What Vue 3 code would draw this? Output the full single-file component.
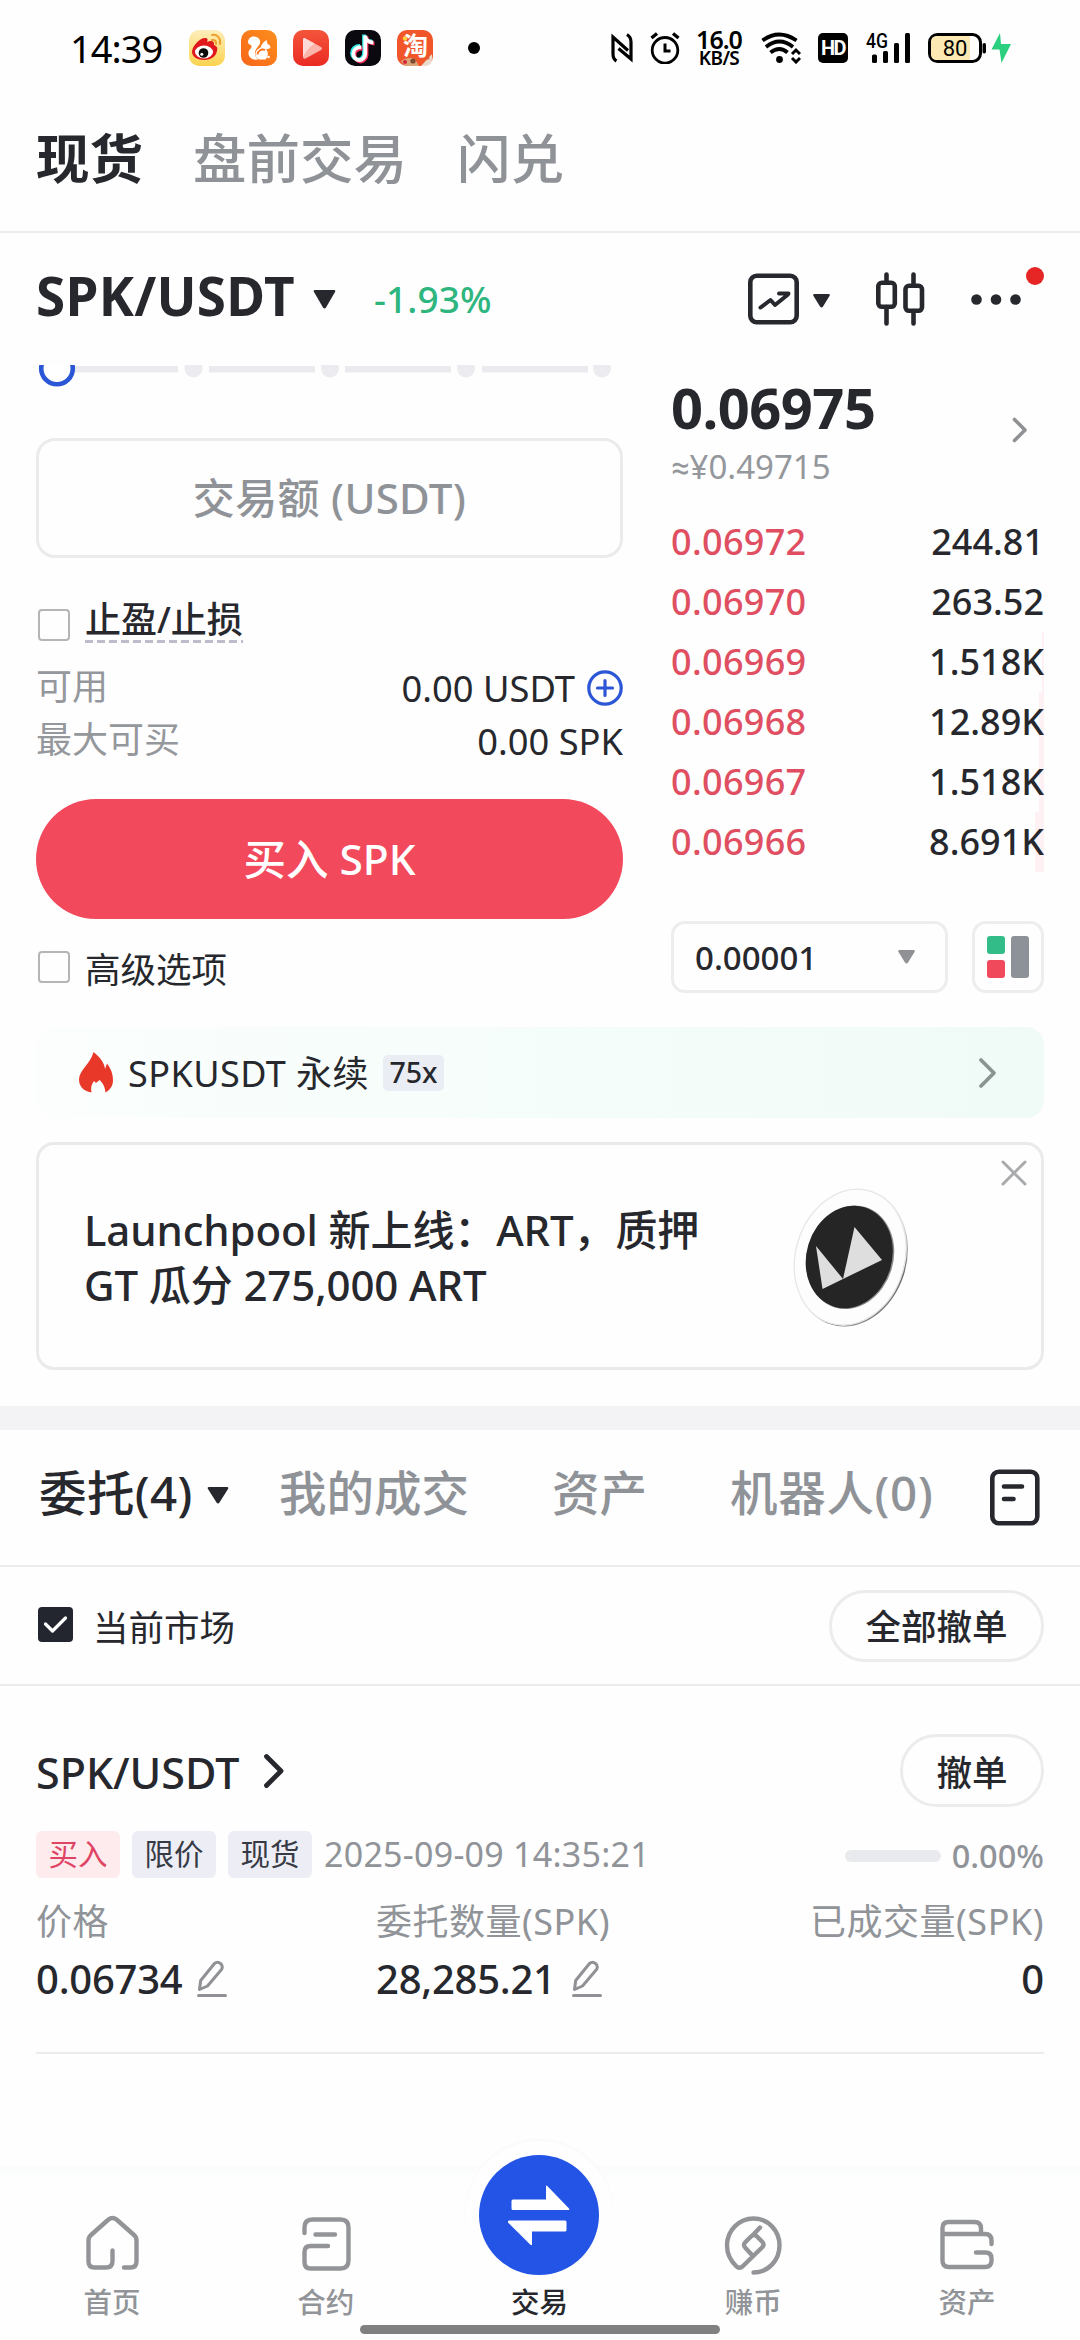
<script setup>
const topTabs = ['现货', '盘前交易', '闪兑']

const asks = [
  { price: '0.06972', amount: '244.81', depth: 0 },
  { price: '0.06970', amount: '263.52', depth: 0 },
  { price: '0.06969', amount: '1.518K', depth: 2 },
  { price: '0.06968', amount: '12.89K', depth: 5 },
  { price: '0.06967', amount: '1.518K', depth: 5 },
  { price: '0.06966', amount: '8.691K', depth: 9 },
]

const sliderStops = [157.5, 294, 430, 566]
const sliderBars = [[38, 104], [173, 106], [309, 106], [446, 106]]
</script>

<template>
  <div class="screen">
    <header class="status">
      <span class="clock">14:39</span>
      <div class="apps">
        <svg width="36" height="36" viewBox="0 0 36 36">
          <defs>
            <linearGradient id="wb" x1="0" y1="0" x2="0" y2="1"><stop offset="0" stop-color="#fdeebb" /><stop offset="1" stop-color="#fcd34f" /></linearGradient>
          </defs>
          <rect width="36" height="36" rx="10" fill="url(#wb)" />
          <path d="M3 22c0-6 8-14 13-14 3 0 3 2 2 4 4-2 8-1 7 3 3 1 4 3 3 6-1 6-7 9-13 9S3 27 3 22z" fill="#e0171c" />
          <ellipse cx="15" cy="22" rx="9" ry="6.500" fill="#fff" />
          <circle cx="14.500" cy="23" r="4.800" fill="#0b0b0b" />
          <circle cx="12.800" cy="24.300" r="1.500" fill="#fff" />
          <path d="M23 5c5-1 9 3 8 9M23 10c3-.5 4.500 1 4 4" fill="none" stroke="#f0a02c" stroke-width="2" stroke-linecap="round" />
        </svg>
        <svg width="36" height="36" viewBox="0 0 36 36">
          <defs>
            <linearGradient id="uc" x1="1" y1="0" x2="0" y2="1"><stop offset="0" stop-color="#fb8f1c" /><stop offset="1" stop-color="#f9661a" /></linearGradient>
          </defs>
          <rect width="36" height="36" rx="10" fill="url(#uc)" />
          <path d="M12.500 6.500c5.500 0 8 4 6 8-2.500 3.500-5 5.500-4.500 9.500.3 2.500 1.500 4.500 3 5.500-6 1-10-2.500-9.500-7 .5-3.500 3.500-4 3-6.500-.5-2-3.500-1-3.500-4 0-3 2.500-5.500 5.500-5.500z" fill="#fff" />
          <path d="M25.500 10l1 4c2.500 1 3 2.500 3 4-2 1-3 1-4.500 1 2.500 3 2.500 7.500-.5 10.500H19c-4-.5-5.500-4.500-4-8 1.500-2.500 3-3 4.500-4 1-3.500 3-5.500 6-7.500z" fill="#fff" />
          <path d="M16.500 24.500c.5-4 4-6 7.500-4.500" fill="none" stroke="#f9721a" stroke-width="1.800" />
          <circle cx="27.500" cy="27" r="1.300" fill="#fff" />
        </svg>
        <svg width="36" height="36" viewBox="0 0 36 36">
          <defs>
            <linearGradient id="pl" x1="0" y1="0" x2="0" y2="1"><stop offset="0" stop-color="#f4553b" /><stop offset="1" stop-color="#ea2a22" /></linearGradient>
          </defs>
          <rect width="36" height="36" rx="10" fill="url(#pl)" />
          <path d="M10 10q0-3 2.500-1.500l15.500 8.500q2 1.500 0 3l-15.500 8.500q-2.500 1-2.500-1.500z" fill="#fbb5ab" />
          <path d="M10 27V10q0-3 2.500-1.500l9 5q-8 6-11.500 13.500z" fill="#fddad5" />
        </svg>
        <svg width="36" height="36" viewBox="0 0 36 36">
          <rect width="36" height="36" rx="10" fill="#0a0910" />
          <g fill="none" stroke-width="3.800">
            <path d="M15 16c-5 0-8 3-8 7s3 6.500 6 6.500 6-2.500 6-6.500V4.500c0 4 3 7 8 7" stroke="#2fe8e6" />
            <path d="M17.500 18.500c-5 0-8 3-8 6.500s3 6.500 6 6.500 6-3 6-6.500V6.500c0 4 3 7 8 7" stroke="#f4335c" />
            <path d="M16.300 17.200c-5 0-8 3-8 6.500s3 6.500 6 6.500 6-3 6-6.500V5.500c0 4 3 7 8 7" stroke="#fff" />
          </g>
        </svg>
        <svg class="open" width="36" height="36" viewBox="0 0 36 36">
          <rect width="36" height="36" rx="10" fill="#f1562b" />
          <path d="M4 31q7-5 14-2l4 7H10q-4-1-6-5z" fill="#dba477" />
          <path d="M24 36l11-12v4q0 7-6 8z" fill="#e9dccd" />
          <circle cx="8" cy="32" r="2" fill="#d4233a" />
          <circle cx="16" cy="31" r="2.600" fill="#7c4a31" />
          <circle cx="31" cy="28" r="1.500" fill="#e35a3a" />
          <text x="18.500" y="25" text-anchor="middle" class="tao">淘</text>
          <circle cx="8" cy="8.500" r="2.200" fill="#ffd23c" />
        </svg>
      </div>
      <i class="more-dot"></i>
      <div class="signals">
        <svg class="nfc" width="22" height="30" viewBox="0 0 22 30" fill="none" stroke="#000" stroke-width="3.200">
          <path d="M5.500 28Q2 26 2 21V4l15 13.500" />
          <path d="M16 1.500Q20 4 20 9v17L7.500 15.500" />
        </svg>
        <svg class="alarm" width="30" height="32" viewBox="0 0 30 32" fill="none" stroke="#000" stroke-width="2.800">
          <circle cx="15" cy="18.300" r="12.800" />
          <path d="M15 11.500V19h5.500" stroke-width="3" />
          <path d="M1.500 6L7 1.500M23 1.500L28.500 6" stroke-width="3.400" />
        </svg>
        <div class="rate"><b>16.0</b><span>KB/S</span></div>
        <svg class="wifi" width="40" height="32" viewBox="0 0 40 32" fill="none" stroke="#000" stroke-width="3.800">
          <path d="M1.500 8.500Q18 -3.500 35.500 8.500" />
          <path d="M5 15Q18.500 4 32 15" />
          <path d="M9.500 20.500Q18.500 13.500 26.500 20.500" />
          <circle cx="18.500" cy="27.500" r="3.400" fill="#000" stroke="none" />
          <path d="M31 22l4-4 4 4M31 26l4 4 4-4" stroke-width="3" />
        </svg>
        <span class="hd">HD</span>
        <svg class="cell open" width="44" height="32" viewBox="0 0 44 32">
          <text x="0" y="16" class="net" textLength="22" lengthAdjust="spacingAndGlyphs">4G</text>
          <g fill="#000">
            <rect x="6" y="22.500" width="5" height="8.500" rx="1.500" />
            <rect x="17" y="19" width="5" height="12" rx="1.500" />
            <rect x="28" y="11" width="5" height="20" rx="1.500" />
            <rect x="39" y="1" width="5" height="30" rx="1.500" />
          </g>
        </svg>
        <svg class="battery" width="86" height="32" viewBox="0 0 86 32">
          <rect x="1.500" y="2.500" width="51" height="27" rx="8" fill="#fff" stroke="#000" stroke-width="3" />
          <path d="M9 4h33v24H9q-6 0-6-6V10q0-6 6-6z" fill="#fce8b2" />
          <rect x="54.500" y="11" width="3.500" height="10.500" rx="1.700" fill="#000" />
          <text x="27" y="23.500" text-anchor="middle" class="pct">80</text>
          <path d="M72 1L63.500 17.500h8L73.500 31 83 12h-10z" fill="#2bd07f" />
        </svg>
      </div>
    </header>

    <nav class="top-tabs">
      <span v-for="(t, i) in topTabs" :key="t" :class="{ active: i === 0 }">{{ t }}</span>
    </nav>

    <section class="pair-bar">
      <h1>SPK/USDT</h1>
      <svg class="pair-tri" width="23" height="19" viewBox="0 0 23 19"><path d="M2 0h19q2 0 1 2L13 17.500q-1.500 2-3 0L1 2Q0 0 2 0z" fill="#26282d" /></svg>
      <span class="change">-1.93%</span>
      <div class="tools">
        <svg width="51" height="52" viewBox="0 0 51 52" fill="none" stroke="#26282d" stroke-width="4.600" stroke-linecap="round" stroke-linejoin="round">
          <rect x="2.300" y="2.800" width="46.400" height="46.400" rx="6.500" />
          <path d="M12.500 34.500L22.500 27l4.500 5L40 21.500M31 20.500h9.500" stroke-width="4" />
        </svg>
        <svg class="tool-tri" width="17" height="14" viewBox="0 0 17 14"><path d="M1.500 0h14q2 0 1 2L10 12.500q-1.500 2-3 0L.5 2Q-.5 0 1.500 0z" fill="#26282d" /></svg>
        <svg class="candles" width="49" height="54" viewBox="0 0 49 54" fill="none" stroke="#26282d" stroke-width="4.600" stroke-linecap="round">
          <rect x="2.300" y="10.800" width="16.500" height="24" rx="3.500" />
          <rect x="29.500" y="13.800" width="16.500" height="25" rx="3.500" />
          <path d="M10.500 2.500v8M10.500 35v16.500M37.500 2.500v11M37.500 39v12.500" />
        </svg>
        <div class="more">
          <svg width="50" height="11" viewBox="0 0 50 11" fill="#26282d"><circle cx="5.500" cy="5.500" r="5.300" /><circle cx="25" cy="5.500" r="5.300" /><circle cx="44.500" cy="5.500" r="5.300" /></svg>
          <i class="badge"></i>
        </div>
      </div>
    </section>

    <section class="trade">
      <div class="form">
        <svg class="slider" width="587" height="22" viewBox="0 0 587 22">
          <rect v-for="b in sliderBars" :key="b[0]" :x="b[0]" y="1" :width="b[1]" height="6.500" fill="#ebebef" />
          <circle v-for="s in sliderStops" :key="s" :cx="s" cy="3.500" r="9" fill="#ebebf0" />
          <circle cx="21" cy="3.500" r="15.800" fill="#fff" stroke="#2b56d6" stroke-width="4.600" />
        </svg>
        <div class="input">交易额 (USDT)</div>
        <div class="check-row tp">
          <i class="box"></i><span class="dashed">止盈/止损</span>
        </div>
        <div class="kv kv-a">
          <span>可用</span>
          <b>0.00 USDT
            <svg width="36" height="36" viewBox="0 0 36 36" fill="none" stroke="#2b56d6" stroke-width="3.200" stroke-linecap="round"><circle cx="18" cy="18" r="16.200" /><path d="M10.500 18h15M18 10.500v15" /></svg>
          </b>
        </div>
        <div class="kv"><span>最大可买</span><b>0.00 SPK</b></div>
        <button class="buy">买入 SPK</button>
        <div class="check-row adv"><i class="box"></i><span>高级选项</span></div>
      </div>

      <div class="book">
        <div class="last">
          <div>
            <div class="last-price">0.06975</div>
            <div class="fiat"><span class="approx">≈</span>¥0.49715</div>
          </div>
          <svg width="16" height="26" viewBox="0 0 16 26" fill="none" stroke="#8f9195" stroke-width="3.600" stroke-linecap="round" stroke-linejoin="round"><path d="M2.500 2.500L13 13 2.500 23.500" /></svg>
        </div>
        <div class="asks">
          <div v-for="a in asks" :key="a.price" class="ask">
            <i class="depth" :style="{ width: a.depth + 'px' }"></i>
            <span class="ask-price">{{ a.price }}</span>
            <span class="ask-amount">{{ a.amount }}</span>
          </div>
        </div>
        <div class="book-tools">
          <div class="step">
            <span>0.00001</span>
            <svg width="17" height="14" viewBox="0 0 17 14"><path d="M1.500 0h14q2 0 1 2L10 12.500q-1.500 2-3 0L.5 2Q-.5 0 1.500 0z" fill="#8f9195" /></svg>
          </div>
          <div class="layout">
            <svg width="42" height="42" viewBox="0 0 42 42"><rect width="18" height="18" rx="3" fill="#32bd88" /><rect y="24" width="18" height="18" rx="3" fill="#f1495c" /><rect x="24" width="18" height="42" rx="3" fill="#8d9299" /></svg>
          </div>
        </div>
      </div>
    </section>

    <section class="perp">
      <svg class="flame" width="34" height="41" viewBox="0 0 34 41"><path d="M14.500 0C21 5 25.500 11 26 17l2-5.500c4 5 6 11 6 16.500 0 6-3 10-7.500 12.500-.5-5-2-9-6-12.500l-3.500 3-2-2c-2.500 3-3.500 7-2.500 11.500C4 39 0 34 0 27.500 0 18 11.500 12 14.500 0z" fill="#e8382a" /></svg>
      <span class="perp-name">SPKUSDT 永续</span>
      <span class="lev">75x</span>
      <svg class="perp-go" width="19" height="32" viewBox="0 0 19 32" fill="none" stroke="#8a9491" stroke-width="3.800" stroke-linecap="round" stroke-linejoin="round"><path d="M3 3l13 13L3 29" /></svg>
    </section>

    <section class="promo">
      <p>Launchpool 新上线：ART，质押<br />GT 瓜分 275,000 ART</p>
      <svg class="coin" width="120" height="142" viewBox="0 0 120 142">
        <defs>
          <linearGradient id="rim" x1="0" y1="0" x2="1" y2="1"><stop offset="0" stop-color="#ededed" /><stop offset=".5" stop-color="#d8d8d8" /><stop offset=".75" stop-color="#6c6c6c" /><stop offset="1" stop-color="#9a9a9a" /></linearGradient>
        </defs>
        <g transform="rotate(17 60 71)">
          <ellipse cx="60.500" cy="71" rx="55" ry="69.500" fill="url(#rim)" />
          <ellipse cx="59" cy="70.500" rx="54.500" ry="69" fill="#fdfdfd" stroke="#e6e6e6" stroke-width="1.300" />
          <ellipse cx="59" cy="70.500" rx="43.200" ry="52.500" fill="#8b8b8b" />
          <ellipse cx="58" cy="70.500" rx="42.700" ry="52" fill="#252525" />
        </g>
        <path d="M63.500 40L52 92 91 73z" fill="#dedede" />
        <path d="M25 59L52 92 31.500 102z" fill="#dedede" />
      </svg>
      <svg class="close" width="28" height="28" viewBox="0 0 28 28" fill="none" stroke="#a8aaac" stroke-width="3" stroke-linecap="round"><path d="M3 3l22 22M25 3L3 25" /></svg>
    </section>

    <div class="band"></div>

    <nav class="order-tabs">
      <span class="active t1">委托(4)</span>
      <svg class="t-tri" width="22" height="17" viewBox="0 0 22 17"><path d="M2 0h18q2 0 1 2l-8.500 13.500q-1.500 2-3 0L1 2Q0 0 2 0z" fill="#26282d" /></svg>
      <span class="t2">我的成交</span>
      <span class="t3">资产</span>
      <span class="t4">机器人(0)</span>
      <svg class="history" width="50" height="57" viewBox="0 0 50 57" fill="none" stroke="#26282d" stroke-width="4.600" stroke-linecap="round"><rect x="2.300" y="2.800" width="45" height="51.500" rx="6.500" /><path d="M14 17.500h18M14 30h9.500" /></svg>
    </nav>

    <div class="filter">
      <svg width="35" height="35" viewBox="0 0 35 35"><rect width="35" height="35" rx="4" fill="#23262f" /><path d="M7.500 17l7 7L27.500 11" fill="none" stroke="#fff" stroke-width="3.200" stroke-linecap="round" stroke-linejoin="round" /></svg>
      <span>当前市场</span>
      <button class="pill all">全部撤单</button>
    </div>

    <article class="order">
      <div class="order-head">
        <h2>SPK/USDT</h2>
        <svg width="22" height="36" viewBox="0 0 22 36" fill="none" stroke="#26282d" stroke-width="4.800" stroke-linecap="round" stroke-linejoin="round"><path d="M3.500 3.500L18 18 3.500 32.500" /></svg>
        <button class="pill one">撤单</button>
      </div>
      <div class="meta">
        <span class="tag red">买入</span><span class="tag">限价</span><span class="tag">现货</span>
        <time>2025-09-09 14:35:21</time>
        <i class="progress"></i>
        <span class="fill">0.00%</span>
      </div>
      <div class="cols labels"><span>价格</span><span>委托数量(SPK)</span><span>已成交量(SPK)</span></div>
      <div class="cols values">
        <span>0.06734
          <svg width="30" height="38" viewBox="0 0 30 38" fill="none" stroke="#8f9195" stroke-width="3" stroke-linecap="round" stroke-linejoin="round"><path d="M2.500 29.500l1.200-9L17.500 3.500q3-2.500 6 0 3 2.500 1 6L10.500 26z" /><path d="M1.500 35.500h27" /></svg>
        </span>
        <span>28,285.21
          <svg class="pen2" width="30" height="38" viewBox="0 0 30 38" fill="none" stroke="#8f9195" stroke-width="3" stroke-linecap="round" stroke-linejoin="round"><path d="M2.500 29.500l1.200-9L17.500 3.500q3-2.500 6 0 3 2.500 1 6L10.500 26z" /><path d="M1.500 35.500h27" /></svg>
        </span>
        <span>0</span>
      </div>
    </article>

    <nav class="bottom">
      <a>
        <svg width="60" height="60" viewBox="0 0 60 60" fill="none" stroke="#929497" stroke-width="4.400" stroke-linecap="round" stroke-linejoin="round"><path d="M30.500 36.500V47q0 6.500-6.500 6.500H12.500q-6 0-6-6V26.500q0-3.500 2.500-5.500L26.500 5.500q4-3 8 0L52 21q2.500 2 2.500 5.500v21q0 6-6 6H42" /></svg>
        <span>首页</span>
      </a>
      <a>
        <svg width="60" height="60" viewBox="0 0 60 60" fill="none" stroke="#929497" stroke-width="4.400" stroke-linecap="round" stroke-linejoin="round"><path d="M8.500 19v-5.500q0-8 8-8h28q8 0 8 8v33q0 8-8 8h-30q-6 0-6-6.500V38q0-6 6-6H32M19.500 20.500H39" /></svg>
        <span>合约</span>
      </a>
      <a class="current">
        <i class="trade-btn">
          <svg width="62" height="60" viewBox="0 0 62 60" fill="#fff"><path d="M5 14.500h33V1.500q0-1.500 1.300-.5L61 23.500q1 1.500-1 1.500H5q-1.500 0-1.500-1.500V16q0-1.500 1.500-1.500z" /><path d="M57 46.500H24V59.500q0 1.500-1.300.5L0 37.500Q-.5 35.500 1.500 35.500H57q1.500 0 1.500 1.500v8q0 1.500-1.500 1.500z" /></svg>
        </i>
        <span>交易</span>
      </a>
      <a>
        <svg class="open" width="60" height="60" viewBox="0 0 60 60" fill="none" stroke="#929497" stroke-width="4.400" stroke-linecap="round" stroke-linejoin="round"><path d="M30.500 58.500C45 58.500 56.500 46.500 56.500 31.500S45 4.500 30.500 4.500 4 16.500 4 31.500c0 8 3.500 15 9 20.500q3.500 3.500 7 0L39 33.500q3-3 0-6l-5-5q-3-3-6 0l-5.500 5.500q-3 3 0 6l6.500 7M30.500 20.500l6.500-7" /></svg>
        <span>赚币</span>
      </a>
      <a>
        <svg width="60" height="60" viewBox="0 0 60 60" fill="none" stroke="#929497" stroke-width="4.400" stroke-linecap="round" stroke-linejoin="round"><path d="M5.500 20V14q0-6 6-6h26q6.500 0 6.500 6.500V20M5.500 20H48q6.500 0 6.500 6.500V30M5.500 20v26.500q0 6.500 6.500 6.500h36q6.500 0 6.500-6.500V44.500q0-6-6-6H39" /></svg>
        <span>资产</span>
      </a>
      <i class="home-bar"></i>
    </nav>
  </div>
</template>

<style>
body {
  margin: 0;
  background: #fefefe;
}
</style>

<style scoped>
* {
  box-sizing: border-box;
}
.screen {
  width: 1080px;
  height: 2340px;
  overflow: hidden;
  display: flex;
  flex-direction: column;
  background: #fefefe;
  color: #26282d;
  font-family: 'Noto Sans', 'Noto Sans CJK SC', sans-serif;
  white-space: nowrap;
}
.screen > * {
  flex: none;
}
svg {
  display: block;
  flex: none;
}
.open {
  overflow: visible;
}
i {
  display: block;
  flex: none;
}
button {
  font-family: inherit;
  padding: 0;
  margin: 0;
  color: inherit;
}
h1,
h2,
p {
  margin: 0;
}

/* status bar */
.status {
  height: 96px;
  display: flex;
  align-items: center;
  padding-left: 70px;
  color: #000;
}
.clock {
  width: 119px;
  font-size: 38px;
  line-height: 40px;
  letter-spacing: -1px;
}
.apps {
  display: flex;
  gap: 16px;
}
.tao {
  font: 700 25px 'Noto Sans CJK SC', sans-serif;
  fill: #fff;
}
.more-dot {
  width: 12px;
  height: 12px;
  border-radius: 50%;
  background: #000;
  margin-left: 35px;
}
.signals {
  display: flex;
  align-items: center;
  margin-left: 131px;
}
.alarm {
  margin-left: 17px;
}
.rate {
  width: 48px;
  margin-left: 15px;
  display: flex;
  flex-direction: column;
  align-items: center;
  text-align: center;
}
.rate b {
  font: 600 25px/20px 'Noto Sans', sans-serif;
  letter-spacing: -1px;
}
.rate span {
  font: 600 19px/18px 'Noto Sans', sans-serif;
  letter-spacing: -0.6px;
}
.wifi {
  margin-left: 18px;
}
.hd {
  width: 30px;
  height: 30px;
  margin-left: 17px;
  border-radius: 5px;
  background: #000;
  color: #fff;
  font: 700 20px/30px 'Roboto', sans-serif;
  letter-spacing: -1.5px;
  text-align: center;
}
.cell {
  margin-left: 18px;
}
.net {
  font: 500 21px 'Roboto', sans-serif;
}
.battery {
  margin-left: 18px;
}
.pct {
  font: 400 22px 'Roboto', sans-serif;
}

/* top tabs */
.top-tabs {
  height: 137px;
  padding: 0 36px 10px;
  display: flex;
  align-items: center;
  gap: 50px;
  border-bottom: 2px solid #ececed;
  font-size: 53.5px;
  line-height: 70px;
  font-weight: 500;
  color: #8f9398;
}
.top-tabs .active {
  font-weight: 700;
  color: #26282d;
}

/* pair bar */
.pair-bar {
  height: 132px;
  padding: 0 36px;
  display: flex;
  align-items: center;
}
h1 {
  font-size: 53px;
  line-height: 64px;
  font-weight: 700;
  width: 261px;
  margin-top: -6px;
  letter-spacing: 0.3px;
}
.pair-tri {
  margin-left: 16px;
}
.change {
  margin-left: 38px;
  font-size: 37px;
  line-height: 44px;
  font-weight: 500;
  letter-spacing: 0.1px;
  color: #2fb67f;
}
.tools {
  margin-left: auto;
  display: flex;
  align-items: center;
}
.tool-tri {
  margin: 3px 46px 0 14px;
}
.more {
  position: relative;
  margin-left: 46px;
  padding-right: 23px;
}
.badge {
  position: absolute;
  right: 0;
  top: -27px;
  width: 18px;
  height: 18px;
  border-radius: 50%;
  background: #e62525;
}

/* trade area */
.trade {
  height: 662px;
  padding: 0 36px;
  display: flex;
  justify-content: space-between;
}
.form {
  width: 587px;
}
.input {
  height: 120px;
  margin-top: 51px;
  border: 3px solid #ebebec;
  border-radius: 19px;
  text-align: center;
  font-size: 42px;
  line-height: 114px;
  font-weight: 500;
  letter-spacing: 0.3px;
  color: #8f9398;
}
.check-row {
  display: flex;
  align-items: center;
  font-size: 35.5px;
}
.box {
  width: 32px;
  height: 32px;
  margin: 0 15px 0 2px;
  border: 2.5px solid #b4b5b7;
  border-radius: 4px;
}
.tp {
  height: 43px;
  margin-top: 42px;
  font-weight: 500;
  font-size: 36px;
}
.tp .box {
  margin-top: 7px;
}
.dashed {
  height: 43px;
  line-height: 40px;
  background: repeating-linear-gradient(90deg, #bcbccb 0 8px, transparent 8px 12px) left bottom / 100% 3px no-repeat;
}
.kv {
  height: 52px;
  display: flex;
  justify-content: space-between;
  align-items: center;
  font-size: 36.3px;
  line-height: 52px;
}
.kv-a {
  height: 54px;
  margin-top: 18px;
}
.kv span {
  color: #94979b;
  font-size: 36px;
  margin-top: -2px;
}
.kv b {
  font-weight: 400;
  display: flex;
  align-items: center;
  gap: 12px;
}
.buy {
  display: block;
  width: 587px;
  height: 120px;
  margin-top: 32px;
  border: 0;
  border-radius: 60px;
  background: #f2495c;
  color: #fff;
  font-size: 42.5px;
  line-height: 120px;
  font-weight: 500;
}
.adv {
  height: 52px;
  margin-top: 23px;
}
.adv .box {
  margin-top: -2px;
}
.adv span {
  margin-top: -2px;
}
.book {
  width: 373px;
}
.last {
  margin-top: 7px;
  display: flex;
  justify-content: space-between;
  align-items: center;
  padding-right: 16px;
}
.last svg {
  margin-top: -3px;
}
.last-price {
  font-size: 56px;
  line-height: 70px;
  font-weight: 700;
  letter-spacing: -0.5px;
}
.fiat {
  margin-top: 3px;
  font-size: 33px;
  line-height: 44px;
  color: #94979b;
}
.approx {
  font-family: 'Roboto', sans-serif;
}
.asks {
  margin-top: 22px;
}
.ask {
  position: relative;
  height: 60px;
  display: flex;
  justify-content: space-between;
  font-size: 36px;
  line-height: 60px;
  font-weight: 500;
}
.ask span {
  position: relative;
}
.depth {
  position: absolute;
  right: 0;
  top: 0;
  height: 60px;
  background: #fef1f3;
}
.ask-price {
  color: #df4f61;
  letter-spacing: 0.3px;
}
.book-tools {
  margin-top: 49px;
  display: flex;
  justify-content: space-between;
}
.step,
.layout {
  height: 72px;
  border: 3px solid #ecedee;
  border-radius: 14px;
  display: flex;
  align-items: center;
}
.step {
  width: 277px;
  padding: 0 30px 0 21px;
  justify-content: space-between;
  font-size: 33px;
  font-weight: 500;
}
.layout {
  width: 72px;
  justify-content: center;
}

/* perpetual strip */
.perp {
  height: 91px;
  margin: 0 36px;
  padding: 0 47px 0 43px;
  border-radius: 18px;
  background: linear-gradient(90deg, #fbfefd, #f5fdfa 50%, #f0faf6);
  display: flex;
  align-items: center;
}
.perp-name {
  margin-left: 15px;
  margin-top: -2px;
  font-size: 36px;
  letter-spacing: 0.45px;
}
.lev {
  margin-left: 14px;
  width: 61px;
  height: 36px;
  border-radius: 5px;
  background: #ebedf5;
  text-align: center;
  font-size: 28.5px;
  line-height: 35px;
  font-weight: 500;
}
.perp-go {
  margin-left: auto;
}

/* promo card */
.promo {
  position: relative;
  height: 228px;
  margin: 24px 36px 0;
  padding-left: 45px;
  border: 3px solid #e9eaeb;
  border-radius: 18px;
}
.promo p {
  padding-top: 57px;
  font-size: 42px;
  line-height: 55px;
  font-weight: 500;
  letter-spacing: -0.1px;
}
.coin {
  position: absolute;
  left: 752px;
  top: 42px;
}
.close {
  position: absolute;
  right: 13px;
  top: 14px;
}

.band {
  height: 24px;
  margin-top: 36px;
  background: #f3f3f5;
}

/* order tabs */
.order-tabs {
  height: 137px;
  padding: 0 40px 0 39px;
  border-bottom: 2px solid #ececed;
  display: flex;
  align-items: center;
  font-size: 47.5px;
  font-weight: 500;
  color: #8f9398;
}
.order-tabs span {
  line-height: 60px;
  margin-top: -9px;
}
.order-tabs .active {
  color: #26282d;
  letter-spacing: 0.4px;
}
.t1 {
  width: 157px;
}
.t-tri {
  margin-left: 11px;
  margin-top: -4px;
}
.t2 {
  width: 273px;
  margin-left: 50px;
}
.t3 {
  width: 178px;
}
.t4 {
  letter-spacing: 0.7px;
}
.history {
  margin-left: auto;
}

/* filter row */
.filter {
  height: 119px;
  padding: 0 36px 0 38px;
  border-bottom: 2px solid #ececed;
  display: flex;
  align-items: center;
  font-size: 35.5px;
}
.filter svg {
  margin-top: -2px;
}
.filter span {
  margin-left: 20px;
  margin-top: -1px;
}
.pill {
  margin-left: auto;
  border: 3px solid #ebeced;
  border-radius: 37px;
  background: transparent;
  font-size: 35.5px;
  font-weight: 500;
}
.all {
  width: 215px;
  height: 72px;
  padding-bottom: 3px;
}
.one {
  width: 144px;
  height: 73px;
}

/* order */
.order {
  margin: 48px 36px 0;
  height: 320px;
  border-bottom: 2px solid #ececed;
}
.order-head {
  height: 73px;
  display: flex;
  align-items: center;
}
h2 {
  width: 227px;
  padding-top: 4px;
  font-size: 43px;
  line-height: 56px;
  font-weight: 500;
}
.meta {
  margin-top: 24px;
  height: 47px;
  display: flex;
  align-items: center;
}
.tag {
  width: 84px;
  height: 47px;
  margin-right: 12px;
  border-radius: 6px;
  background: #edeef5;
  text-align: center;
  font-size: 29.5px;
  line-height: 46px;
  color: #363a45;
}
.red {
  background: #feebed;
  color: #e04464;
}
time {
  margin-top: -1px;
  font-size: 34px;
  letter-spacing: 0.25px;
  color: #909398;
}
.progress {
  width: 96px;
  height: 12px;
  margin: 2px 11px 0 auto;
  border-radius: 6px;
  background: #e9eaee;
}
.fill {
  margin-top: 2px;
  font-size: 32.5px;
  font-weight: 500;
  color: #909398;
}
.cols {
  display: grid;
  grid-template-columns: 340px 340px 1fr;
}
.cols > :last-child {
  justify-self: end;
}
.labels {
  margin-top: 20px;
  font-size: 36px;
  line-height: 48px;
  letter-spacing: 0.5px;
  color: #909398;
}
.values {
  margin-top: 9px;
  font-size: 40px;
  line-height: 47px;
  font-weight: 500;
  letter-spacing: -0.25px;
}
.values span {
  display: flex;
  align-items: center;
}
.values svg {
  margin-left: 15px;
}
.values .pen2 {
  margin-left: 16px;
}

/* bottom navigation */
.bottom {
  position: relative;
  height: 175px;
  margin-top: auto;
  padding: 0 6px 0 5px;
  display: flex;
  background: linear-gradient(#fafbfb, #fefefe 14px);
}
.bottom a {
  flex: 1;
  display: flex;
  flex-direction: column;
  align-items: center;
  padding-top: 49px;
  font-size: 28.5px;
  line-height: 36px;
  font-weight: 500;
  color: #919498;
}
.bottom a span {
  margin-top: 10px;
}
.bottom .current {
  padding-top: 0;
  color: #26282d;
}
.trade-btn {
  width: 120px;
  height: 120px;
  margin-top: -10px;
  border-radius: 50%;
  background: #2354e6;
  display: flex;
  align-items: center;
  justify-content: center;
  box-shadow: 0 0 0 14px #fefefe, 0 -2px 3px 14px #f9f9fa;
}
.bottom .current span {
  margin-top: 9px;
}
.home-bar {
  position: absolute;
  left: 360px;
  bottom: 6px;
  width: 360px;
  height: 9px;
  border-radius: 5px;
  background: #808080;
}
</style>
